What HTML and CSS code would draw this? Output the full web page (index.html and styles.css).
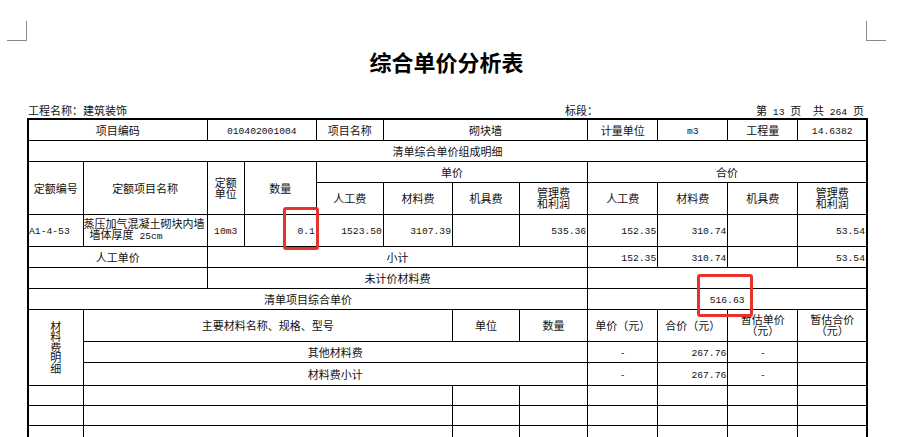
FILE: index.html
```html
<!DOCTYPE html>
<html lang="zh">
<head>
<meta charset="utf-8">
<title>综合单价分析表</title>
<link rel="stylesheet" href="styles.css">
</head>
<body>
<div class="page">
  <div class="marks">
    <div class="mark mark-left"></div>
    <div class="mark mark-right"></div>
  </div>
  <h1 class="title">综合单价分析表</h1>
  <div class="meta">
    <div class="meta-name">工程名称：建筑装饰</div>
    <div class="meta-section">标段：</div>
    <div class="meta-page">第<span class="n"> 13 </span>页<span class="n">  </span>共<span class="n"> 264 </span>页</div>
  </div>
  <table class="grid">
    <colgroup>
      <col class="c1"><col class="c2"><col class="c3"><col class="c4">
      <col class="c5"><col class="c6"><col class="c7"><col class="c8">
      <col class="c9"><col class="c10"><col class="c11"><col class="c12">
    </colgroup>
    <tr class="h21">
      <td colspan="2">项目编码</td>
      <td colspan="2"><span class="n">010402001004</span></td>
      <td>项目名称</td>
      <td colspan="3">砌块墙</td>
      <td>计量单位</td>
      <td><span class="n">m3</span></td>
      <td>工程量</td>
      <td><span class="n">14.6382</span></td>
    </tr>
    <tr class="h21">
      <td colspan="12">清单综合单价组成明细</td>
    </tr>
    <tr class="h21">
      <td rowspan="2">定额编号</td>
      <td rowspan="2">定额项目名称</td>
      <td rowspan="2" class="two">定额<br>单位</td>
      <td rowspan="2">数量</td>
      <td colspan="4">单价</td>
      <td colspan="4">合价</td>
    </tr>
    <tr class="h32">
      <td>人工费</td>
      <td>材料费</td>
      <td>机具费</td>
      <td class="two">管理费<br>和利润</td>
      <td>人工费</td>
      <td>材料费</td>
      <td>机具费</td>
      <td class="two">管理费<br>和利润</td>
    </tr>
    <tr class="h32">
      <td class="left"><span class="n">A1-4-53</span></td>
      <td class="left two">蒸压加气混凝土砌块内墙<br><span class="indent">墙体厚度<span class="n"> 25cm</span></span></td>
      <td><span class="n">10m3</span></td>
      <td class="num"><span class="n">0.1</span></td>
      <td class="num"><span class="n">1523.50</span></td>
      <td class="num"><span class="n">3107.39</span></td>
      <td></td>
      <td class="num"><span class="n">535.36</span></td>
      <td class="num"><span class="n">152.35</span></td>
      <td class="num"><span class="n">310.74</span></td>
      <td></td>
      <td class="num"><span class="n">53.54</span></td>
    </tr>
    <tr class="h21">
      <td colspan="2">人工单价</td>
      <td colspan="6">小计</td>
      <td class="num"><span class="n">152.35</span></td>
      <td class="num"><span class="n">310.74</span></td>
      <td></td>
      <td class="num"><span class="n">53.54</span></td>
    </tr>
    <tr class="h21">
      <td colspan="2"></td>
      <td colspan="6">未计价材料费</td>
      <td colspan="4"></td>
    </tr>
    <tr class="h21">
      <td colspan="8">清单项目综合单价</td>
      <td colspan="4"><span class="n">516.63</span></td>
    </tr>
    <tr class="h32">
      <td rowspan="3" class="vertical">材<br>料<br>费<br>明<br>细</td>
      <td colspan="5">主要材料名称、规格、型号</td>
      <td>单位</td>
      <td>数量</td>
      <td>单价（元）</td>
      <td>合价（元）</td>
      <td class="two">暂估单价<br>（元）</td>
      <td class="two">暂估合价<br>（元）</td>
    </tr>
    <tr class="h21">
      <td colspan="7">其他材料费</td>
      <td><span class="n">-</span></td>
      <td class="num"><span class="n">267.76</span></td>
      <td><span class="n">-</span></td>
      <td></td>
    </tr>
    <tr class="h23">
      <td colspan="7">材料费小计</td>
      <td><span class="n">-</span></td>
      <td class="num"><span class="n">267.76</span></td>
      <td><span class="n">-</span></td>
      <td></td>
    </tr>
    <tr class="h20">
      <td></td><td colspan="5"></td><td></td><td></td><td></td><td></td><td></td><td></td>
    </tr>
    <tr class="h20">
      <td></td><td colspan="5"></td><td></td><td></td><td></td><td></td><td></td><td></td>
    </tr>
    <tr class="h20">
      <td></td><td colspan="5"></td><td></td><td></td><td></td><td></td><td></td><td></td>
    </tr>
  </table>
  <div class="callout callout-qty"></div>
  <div class="callout callout-total"></div>
</div>
</body>
</html>
```

FILE: styles.css
```css
html, body {
  margin: 0;
  padding: 0;
  background: #ffffff;
}

body {
  font-family: "Noto Sans CJK SC", "Noto Sans", sans-serif;
  color: #111111;
  overflow: hidden;
}

.page {
  position: relative;
  width: 902px;
  height: 437px;
  overflow: hidden;
}

.marks {
  display: flex;
  justify-content: space-between;
  padding: 21px 16px 0 7px;
}

.mark {
  width: 20px;
  height: 20px;
  box-sizing: border-box;
  border-bottom: 1px solid #8a8a8a;
}

.mark-left {
  border-right: 1px solid #8a8a8a;
}

.mark-right {
  border-left: 1px solid #8a8a8a;
}

.title {
  margin: 9px 0 0 0;
  width: 893px;
  height: 22px;
  text-align: center;
  font-size: 22px;
  line-height: 22px;
  font-weight: 700;
  color: #000000;
}

.meta {
  display: flex;
  margin: 32px 0 0 28px;
  width: 836px;
  height: 12px;
  font-size: 11px;
  line-height: 12px;
  white-space: pre;
}

.meta-name {
  width: 537px;
}

.meta-section {
  flex: 1;
}

.n {
  font-family: "Liberation Mono", "DejaVu Sans Mono", monospace;
  font-size: 9.7px;
  line-height: 1;
}

.grid {
  margin: 2px 0 0 27px;
  border-collapse: collapse;
  table-layout: fixed;
  width: 841px;
  border: 2px solid #000000;
  font-size: 11px;
  line-height: 12px;
}

.grid td {
  border: 1px solid #000000;
  padding: 0 1px;
  text-align: center;
  vertical-align: middle;
  white-space: nowrap;
  overflow: visible;
}

.c1 { width: 55px; }
.c2 { width: 124px; }
.c3 { width: 37px; }
.c4 { width: 72px; }
.c5 { width: 67px; }
.c6 { width: 69px; }
.c7 { width: 67px; }
.c8 { width: 68px; }
.c9 { width: 70px; }
.c10 { width: 70px; }
.c11 { width: 70px; }
.c12 { width: 69px; }

.h20 { height: 20px; }
.h21 { height: 21px; }
.h23 { height: 23px; }
.h32 { height: 32px; }

.grid td.two {
  line-height: 11px;
}

.grid td.left {
  text-align: left;
  padding-left: 0;
}

.grid td.num {
  text-align: right;
  padding-right: 1px;
}

.indent {
  padding-left: 6px;
}

.grid td.vertical {
  line-height: 10.6px;
}

.callout {
  position: absolute;
  box-sizing: border-box;
  border: 3px solid #e8322b;
  border-radius: 3px;
}

.callout-qty {
  left: 283px;
  top: 207px;
  width: 36px;
  height: 43px;
}

.callout-total {
  left: 697px;
  top: 274px;
  width: 56px;
  height: 43px;
}
```
